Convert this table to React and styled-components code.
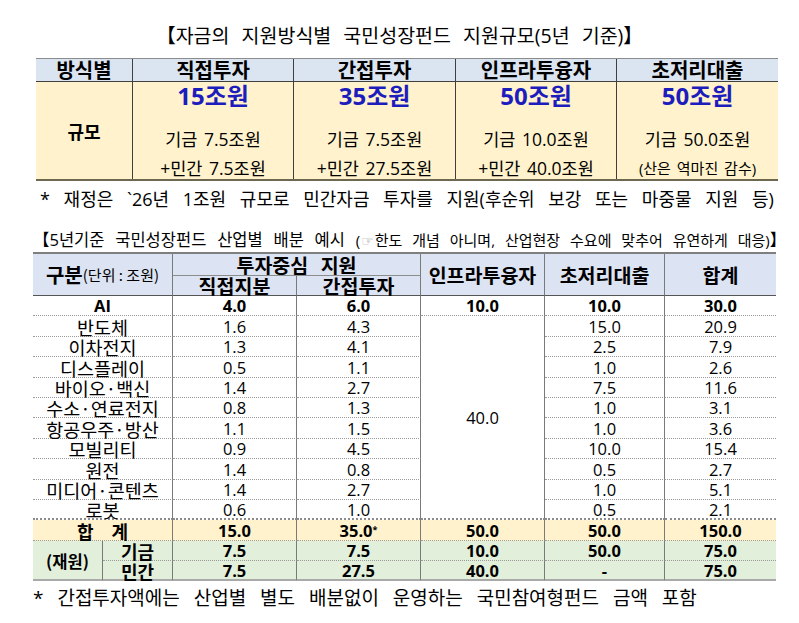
import React from "react";
import styled, { createGlobalStyle, css } from "styled-components";

const GlobalStyle = createGlobalStyle`
  html, body { margin: 0; padding: 0; background: #fff; }
  body {
    font-family: "Open Sans", "Noto Sans CJK KR", sans-serif;
    color: #000;
  }
`;

const Page = styled.div`
  width: 799px;
  height: 623px;
  display: flex;
  flex-direction: column;
  overflow: hidden;
`;

const Title = styled.div`
  margin-top: 24px;
  text-align: center;
  font-size: 19.5px;
  line-height: 24px;
  word-spacing: 7px;
  white-space: nowrap;
`;

/* ---------- Summary table ---------- */
const SummaryGrid = styled.div`
  margin: 10px 0 0 36px;
  width: 742px;
  display: grid;
  grid-template-columns: 96px 161px 162px 161px 162px;
  grid-template-rows: 23px 97px;
  border-top: 1px solid #8c8c8c;
  border-bottom: 2px solid #6d6850;
`;

const SummaryHead = styled.div`
  box-sizing: border-box;
  background: #dbe5f1;
  border-bottom: 1px solid #3f3f3f;
  border-left: ${(p) => (p.$first ? "none" : "1px solid #3f3f3f")};
  display: flex;
  align-items: center;
  justify-content: center;
  font-family: "Noto Sans CJK KR", sans-serif;
  font-weight: 700;
  font-size: 20px;
  line-height: 1;
`;

const SummaryCell = styled.div`
  box-sizing: border-box;
  background: #fff2cc;
  border-left: ${(p) => (p.$first ? "none" : "1px solid #3f3f3f")};
  display: flex;
  flex-direction: column;
  align-items: center;
  justify-content: ${(p) => (p.$first ? "center" : "flex-start")};
`;

const RowLabel = styled.span`
  font-family: "Noto Sans CJK KR", sans-serif;
  font-weight: 700;
  font-size: 18px;
`;

const Amount = styled.div`
  color: #1d1dbd;
  font-weight: 700;
  font-size: 24px;
  line-height: 28px;
  margin-bottom: 16px;
  white-space: nowrap;
`;

const Breakdown = styled.div`
  font-size: ${(p) => (p.$small ? "15px" : "17.5px")};
  line-height: ${(p) => (p.$second ? "30px" : "27px")};
  word-spacing: 2px;
  white-space: nowrap;
`;

/* ---------- Notes ---------- */
const Note = styled.p`
  margin: ${(p) => p.$margin};
  font-size: ${(p) => p.$size}px;
  line-height: 24px;
  word-spacing: ${(p) => p.$ws}px;
  white-space: nowrap;
`;

const Title2 = styled.div`
  margin: 18px 0 0 33px;
  font-size: 16.5px;
  line-height: 22px;
  word-spacing: 6.5px;
  white-space: nowrap;
`;

const TitleSub = styled.span`
  font-size: 15px;
  word-spacing: 6px;
`;

const Hand = styled.span`
  color: #a0a0a0;
  font-family: "DejaVu Sans", sans-serif;
  font-size: 14px;
  margin: 0 1px;
`;

/* ---------- Allocation table ---------- */
const AllocGrid = styled.div`
  margin: 0 0 0 33px;
  width: 743px;
  display: grid;
  grid-template-columns: 70px 70px 124px 124px 124px 120px 111px;
  grid-template-rows: 22px 20px repeat(11, 20.4px) 20.3px 20.3px 20.3px;
  border-top: 2px solid #7f7f7f;
`;

const bottomBorders = {
  head: "1px solid #555",
  sub: "1px solid #8c8c8c",
  dotted: "1px dotted #9a9a9a",
  thick: "2px dotted #8c8c8c",
  end: "2px solid #a9a9a9",
};

const backgrounds = {
  head: "#dce3f2",
  total: "#fff2cc",
  source: "#e2efda",
  none: "#fff",
};

const Cell = styled.div`
  box-sizing: border-box;
  display: flex;
  align-items: center;
  justify-content: center;
  white-space: nowrap;
  line-height: 1;
  padding-top: ${(p) => (p.$head ? "0" : "2px")};
  background: ${(p) => backgrounds[p.$bg || "none"]};
  border-right: ${(p) => (p.$last ? "none" : "1px solid #7a7a7a")};
  border-bottom: ${(p) => bottomBorders[p.$line || "dotted"]};
  grid-column: span ${(p) => p.$cols || 1};
  grid-row: span ${(p) => p.$rows || 1};
  font-size: ${(p) => (p.$head ? 19.5 : 16.5)}px;
  font-weight: ${(p) => (p.$bold ? 700 : 400)};
  gap: ${(p) => p.$gap || 0}px;
  ${(p) =>
    p.$head &&
    css`
      font-family: "Noto Sans CJK KR", sans-serif;
    `}
  ${(p) =>
    p.$wide &&
    css`
      word-spacing: 8px;
    `}
`;

const HeadMain = styled.span`
  font-family: "Noto Sans CJK KR", sans-serif;
  font-weight: 700;
  font-size: 20px;
`;

const HeadUnit = styled.span`
  font-family: "Noto Sans CJK KR", sans-serif;
  font-weight: 400;
  font-size: 15px;
`;

const Label = styled.span`
  font-family: "Noto Sans CJK KR", sans-serif;
  font-size: ${(p) => p.$size || 18.5}px;
`;

const Star = styled.sup`
  font-size: 9px;
  vertical-align: top;
  margin-top: -2px;
`;

const summary = [
  { head: "직접투자", amount: "15조원", l1: "기금 7.5조원", l2: "+민간 7.5조원" },
  { head: "간접투자", amount: "35조원", l1: "기금 7.5조원", l2: "+민간 27.5조원" },
  { head: "인프라투융자", amount: "50조원", l1: "기금 10.0조원", l2: "+민간 40.0조원" },
  { head: "초저리대출", amount: "50조원", l1: "기금 50.0조원", l2: "(산은 역마진 감수)", small: true },
];

const rows = [
  ["반도체", "1.6", "4.3", "15.0", "20.9"],
  ["이차전지", "1.3", "4.1", "2.5", "7.9"],
  ["디스플레이", "0.5", "1.1", "1.0", "2.6"],
  ["바이오·백신", "1.4", "2.7", "7.5", "11.6"],
  ["수소·연료전지", "0.8", "1.3", "1.0", "3.1"],
  ["항공우주·방산", "1.1", "1.5", "1.0", "3.6"],
  ["모빌리티", "0.9", "4.5", "10.0", "15.4"],
  ["원전", "1.4", "0.8", "0.5", "2.7"],
  ["미디어·콘텐츠", "1.4", "2.7", "1.0", "5.1"],
  ["로봇", "0.6", "1.0", "0.5", "2.1"],
];

export default function App() {
  return (
    <Page>
      <GlobalStyle />
      <Title>【자금의 지원방식별 국민성장펀드 지원규모(5년 기준)】</Title>

      <SummaryGrid>
        <SummaryHead $first>방식별</SummaryHead>
        {summary.map((s) => (
          <SummaryHead key={s.head}>{s.head}</SummaryHead>
        ))}
        <SummaryCell $first>
          <RowLabel>규모</RowLabel>
        </SummaryCell>
        {summary.map((s) => (
          <SummaryCell key={s.head}>
            <Amount>{s.amount}</Amount>
            <Breakdown>{s.l1}</Breakdown>
            <Breakdown $second $small={s.small}>
              {s.l2}
            </Breakdown>
          </SummaryCell>
        ))}
      </SummaryGrid>

      <Note $margin="6px 0 0 40px" $size={18} $ws={9}>
        * 재정은 `26년 1조원 규모로 민간자금 투자를 지원(후순위 보강 또는 마중물 지원 등)
      </Note>

      <Title2>
        【5년기준 국민성장펀드 산업별 배분 예시{" "}
        <TitleSub>
          (<Hand>☞</Hand>한도 개념 아니며, 산업현장 수요에 맞추어 유연하게 대응)
        </TitleSub>
        】
      </Title2>

      <AllocGrid>
        <Cell $head $bg="head" $cols={2} $rows={2} $line="head">
          <HeadMain>구분</HeadMain>
          <HeadUnit>(단위 : 조원)</HeadUnit>
        </Cell>
        <Cell $head $bold $wide $bg="head" $cols={2} $line="sub">
          투자중심 지원
        </Cell>
        <Cell $head $bold $bg="head" $rows={2} $line="head">
          인프라투융자
        </Cell>
        <Cell $head $bold $bg="head" $rows={2} $line="head">
          초저리대출
        </Cell>
        <Cell $head $bold $bg="head" $rows={2} $line="head" $last>
          합계
        </Cell>
        <Cell $head $bold $bg="head" $line="head">
          직접지분
        </Cell>
        <Cell $head $bold $bg="head" $line="head">
          간접투자
        </Cell>

        <Cell $bold $cols={2}>AI</Cell>
        <Cell $bold>4.0</Cell>
        <Cell $bold>6.0</Cell>
        <Cell $bold>10.0</Cell>
        <Cell $bold>10.0</Cell>
        <Cell $bold $last>30.0</Cell>

        {rows.map((r, i) => {
          const line = i === rows.length - 1 ? "thick" : "dotted";
          return (
            <React.Fragment key={r[0]}>
              <Cell $cols={2} $line={line}>
                <Label>{r[0]}</Label>
              </Cell>
              <Cell $line={line}>{r[1]}</Cell>
              <Cell $line={line}>{r[2]}</Cell>
              {i === 0 && (
                <Cell $rows={10} $line="thick">
                  40.0
                </Cell>
              )}
              <Cell $line={line}>{r[3]}</Cell>
              <Cell $line={line} $last>
                {r[4]}
              </Cell>
            </React.Fragment>
          );
        })}

        <Cell $bold $bg="total" $cols={2} $gap={18}>
          <Label $size={18}>합</Label>
          <Label $size={18}>계</Label>
        </Cell>
        <Cell $bold $bg="total">15.0</Cell>
        <Cell $bold $bg="total">
          35.0<Star>*</Star>
        </Cell>
        <Cell $bold $bg="total">50.0</Cell>
        <Cell $bold $bg="total">50.0</Cell>
        <Cell $bold $bg="total" $last>150.0</Cell>

        <Cell $bold $bg="source" $rows={2} $line="end">
          <Label $size={16.5}>(재원)</Label>
        </Cell>
        <Cell $bold $bg="source">
          <Label $size={18}>기금</Label>
        </Cell>
        <Cell $bold $bg="source">7.5</Cell>
        <Cell $bold $bg="source">7.5</Cell>
        <Cell $bold $bg="source">10.0</Cell>
        <Cell $bold $bg="source">50.0</Cell>
        <Cell $bold $bg="source" $last>75.0</Cell>

        <Cell $bold $bg="source" $line="end">
          <Label $size={18}>민간</Label>
        </Cell>
        <Cell $bold $bg="source" $line="end">7.5</Cell>
        <Cell $bold $bg="source" $line="end">27.5</Cell>
        <Cell $bold $bg="source" $line="end">40.0</Cell>
        <Cell $bold $bg="source" $line="end">-</Cell>
        <Cell $bold $bg="source" $line="end" $last>75.0</Cell>
      </AllocGrid>

      <Note $margin="5px 0 0 33px" $size={19} $ws={9}>
        * 간접투자액에는 산업별 별도 배분없이 운영하는 국민참여형펀드 금액 포함
      </Note>
    </Page>
  );
}
